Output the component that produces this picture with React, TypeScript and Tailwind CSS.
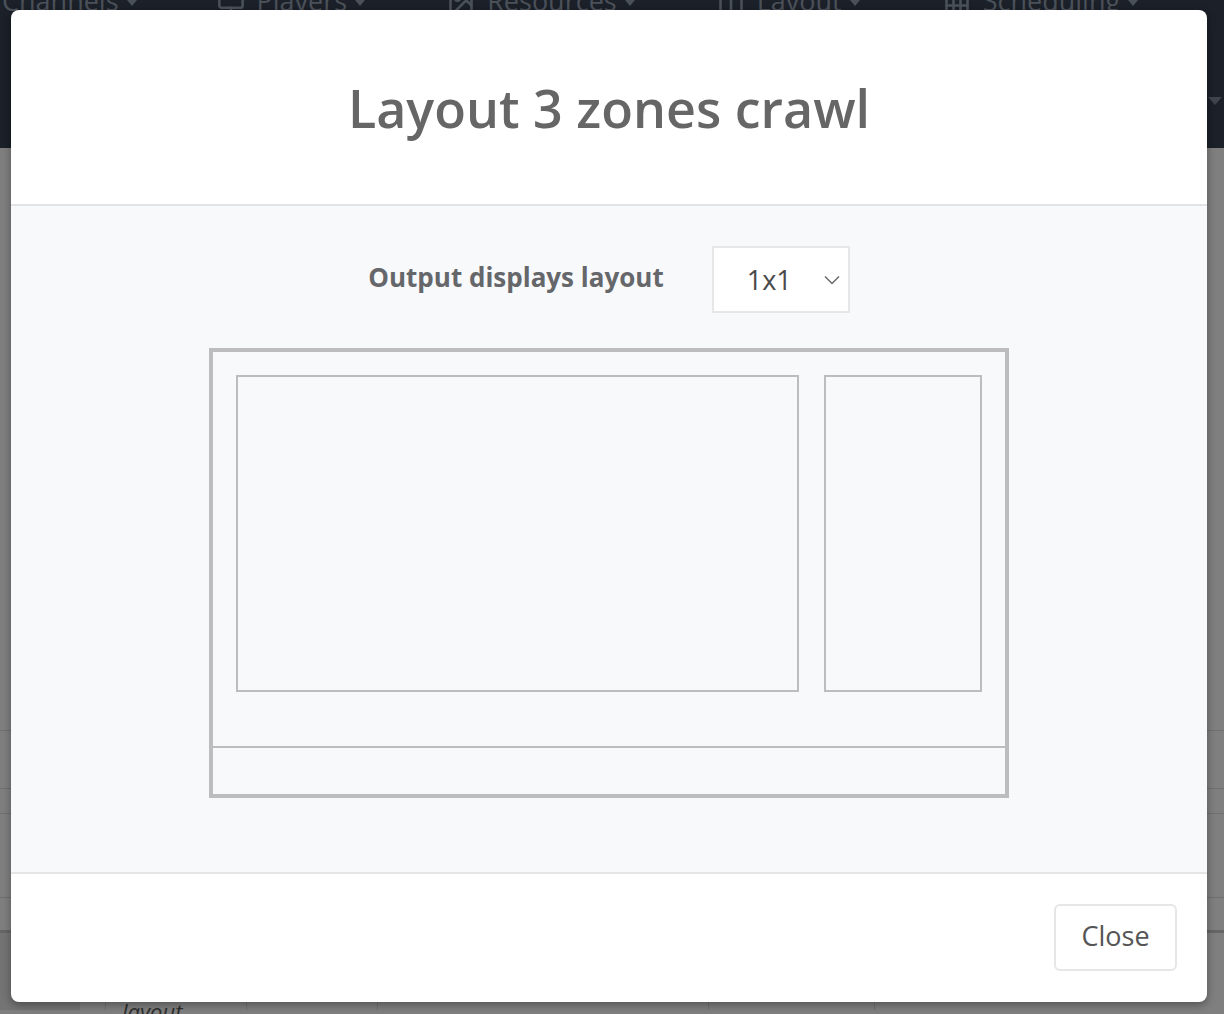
import { Monitor, Image, Columns2, Grid3x3 } from "lucide-react";

const NAV = [
  { label: "Channels", icon: null, cls: "ml-[2px]" },
  { label: "Players", icon: Monitor, cls: "ml-[80px]" },
  { label: "Resources", icon: Image, cls: "ml-[82px]" },
  { label: "Layout", icon: Columns2, cls: "ml-[82px]" },
  { label: "Scheduling", icon: Grid3x3, cls: "ml-[83px]" },
];

function Caret() {
  return (
    <svg width="10" height="7" viewBox="0 0 10 7" className="ml-2 mb-[7px]">
      <path d="M0 0h10L5 6z" fill="#4b5159" />
    </svg>
  );
}

function Chevron() {
  return (
    <svg width="16" height="10" viewBox="0 0 16 10" fill="none">
      <path d="M1 1.5l7 7 7-7" stroke="#6b6b6b" strokeWidth="1.5" />
    </svg>
  );
}

export default function App() {
  return (
    <div
      className="relative h-[1014px] w-full overflow-hidden bg-[#7f7f7f]"
      style={{ fontFamily: '"Open Sans", "Noto Sans", sans-serif' }}
    >
      {/* Dimmed page behind the modal */}
      <div className="h-[148px] bg-[#1b2029] overflow-hidden relative">
        <div className="flex items-end -mt-[13px] text-[27px] leading-[27px] text-[#4b5159]">
          {NAV.map((n) => {
            const Icon = n.icon;
            return (
              <div key={n.label} className={`flex items-end ${n.cls}`}>
                {Icon && <Icon size={28} strokeWidth={2.2} className="mr-3 mb-[-2px]" />}
                <span>{n.label}</span>
                <Caret />
              </div>
            );
          })}
        </div>
        <svg width="14" height="9" viewBox="0 0 14 9" className="absolute right-[2px] top-[97px]">
          <path d="M0 0h14L7 8z" fill="#40454d" />
        </svg>
      </div>
      <div className="flex flex-col">
        <div className="h-[582px]" />
        <div className="h-[58px] border-t border-[#6f6f6f]" />
        <div className="h-[25px] border-t border-[#6f6f6f]" />
        <div className="h-[84px] border-t border-[#6f6f6f]" />
        <div className="h-[33px] border-t border-[#6f6f6f]" />
        <div className="flex h-[80px] border-t-[3px] border-[#666]">
          <div className="w-[80px] bg-[#747474]" />
          <div className="w-[26px] border-r border-[#6f6f6f]" />
          <div className="w-[141px] border-r border-[#6f6f6f] pl-[16px] pt-[62px] italic text-[22px] text-[#2e2e2e]">
            layout
          </div>
          <div className="w-[131px] border-r border-[#6f6f6f]" />
          <div className="w-[331px] border-r border-[#6f6f6f]" />
          <div className="w-[166px] border-r border-[#6f6f6f]" />
        </div>
      </div>

      {/* Modal */}
      <div className="absolute inset-0 pt-[10px] pl-[11px]">
        <div className="w-[1196px] h-[992px] bg-white rounded-[8px] shadow-[0_3px_8px_rgba(0,0,0,0.35)] flex flex-col overflow-hidden">
          <div className="h-[196px] flex items-center justify-center border-b-2 border-[#e2e3e6]">
            <h1 className="text-[52px] font-semibold text-[#666666] pt-[2px]">
              Layout 3 zones crawl
            </h1>
          </div>

          <div className="flex-1 bg-[#f8f9fb] flex flex-col items-center pt-[40px]">
            <div className="flex items-center">
              <span className="text-[26px] font-bold text-[#65676b] mr-[48px] -mt-[4px]">
                Output displays layout
              </span>
              <div className="w-[138px] h-[67px] bg-white border-2 border-[#e6e7e9] flex items-center pl-[33px] pr-[8px]">
                <span className="text-[27px] text-[#4a4a4a] flex-1 pt-[2px]">1x1</span>
                <Chevron />
              </div>
            </div>

            <div className="mt-[35px] w-[800px] h-[450px] border-4 border-[#bdbdc0] flex flex-col">
              <div className="flex-1 flex gap-[25px] pl-[23px] pt-[23px]">
                <div className="w-[563px] h-[317px] border-2 border-[#bdbdc0]" />
                <div className="w-[158px] h-[317px] border-2 border-[#bdbdc0]" />
              </div>
              <div className="h-[48px] border-t-2 border-[#bdbdc0]" />
            </div>
          </div>

          <div className="h-[130px] border-t-2 border-[#e5e5e7] flex items-start justify-end pt-[30px] pr-[30px]">
            <button className="w-[123px] h-[67px] rounded-[6px] border-2 border-[#e6e6e8] bg-white text-[27px] text-[#555] pb-[2px]">
              Close
            </button>
          </div>
        </div>
      </div>
    </div>
  );
}
